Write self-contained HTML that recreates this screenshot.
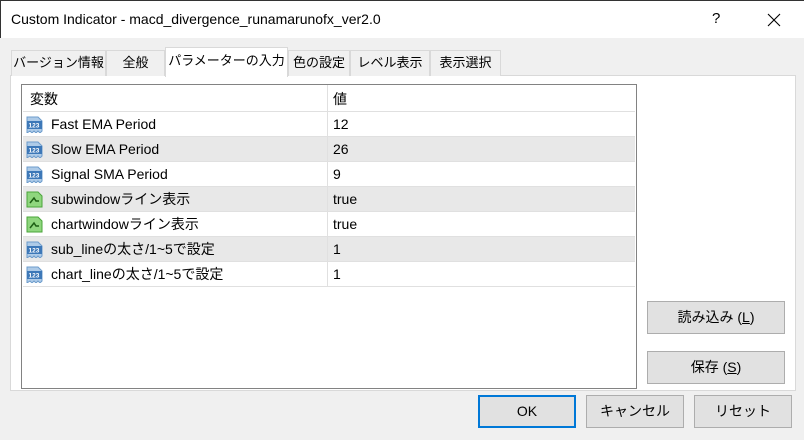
<!DOCTYPE html><html><head><meta charset="utf-8"><style>
*{box-sizing:border-box;margin:0;padding:0}
body{width:804px;height:440px;overflow:hidden;background:#f0f0f0;font-family:"Liberation Sans","Noto Sans CJK JP",sans-serif;font-size:13px;color:#000;position:relative}
.abs{position:absolute}
#title{left:0;top:0;width:804px;height:38px;background:#fff;border-left:1px solid #333;border-top:1px solid #333}
#title span{position:absolute;left:10px;top:10px;font-size:14px}
.tab{position:absolute;top:50px;height:26px;border:1px solid #d9d9d9;border-bottom:none;background:#f0f0f0;text-align:center;line-height:24px;font-size:13px}
#panel{left:10px;top:75px;width:786px;height:316px;background:#fff;border:1px solid #d9d9d9}
#list{left:21px;top:84px;width:616px;height:305px;border:1px solid #828282;background:#fff}
.row{position:absolute;left:1px;width:612px;height:25px;border-bottom:1px solid #e0e0e0;font-size:14px}
.row.g{background:#e8e8e8}
.row .n,.row .v{position:absolute;top:0;height:24px;line-height:24px;white-space:nowrap}
.row .n{left:28px}
.row .v{left:310px}
.row .d{position:absolute;left:304px;top:0;width:1px;height:25px;background:#e0e0e0}
.ic{position:absolute;left:3px;top:4px;width:17px;height:17px}
.btn{position:absolute;height:33px;background:#e1e1e1;border:1px solid #adadad;text-align:center;line-height:31px;font-size:14px}
</style></head><body>
<div id="title" class="abs"><span>Custom Indicator - macd_divergence_runamarunofx_ver2.0</span>
<span style="left:711px;top:9px;font-size:15px">?</span>
<svg style="position:absolute;left:766px;top:12px" width="14" height="14"><path d="M1 1L13 13M13 1L1 13" stroke="#000" stroke-width="1.1"/></svg></div>
<div id="panel" class="abs"></div>
<div class="tab" style="left:11px;width:95px">バージョン情報</div>
<div class="tab" style="left:106px;width:59px">全般</div>
<div class="tab" style="left:165px;width:123px;top:47px;height:30px;background:#fff;line-height:26px">パラメーターの入力</div>
<div class="tab" style="left:288px;width:62px">色の設定</div>
<div class="tab" style="left:350px;width:80px">レベル表示</div>
<div class="tab" style="left:430px;width:71px">表示選択</div>
<div id="list" class="abs">
<div class="row" style="top:0;height:27px"><span class="n" style="left:7px;top:2px">変数</span><span class="v" style="top:2px">値</span><div class="d" style="height:27px"></div></div>
<div class="row" style="top:27px"><svg class="ic"><path d="M1 1H12L16 5V15L14 17L12 15L10 17L8 15L6 17L4 15L1 17Z" fill="#aecbe8" stroke="#6d9ccc"/><rect x="1" y="5" width="15" height="8" fill="#3d78b8"/><text x="2.5" y="11.5" font-size="6.5" fill="#fff" font-family="Liberation Sans" font-weight="bold">123</text></svg><span class="n">Fast EMA Period</span><span class="v">12</span><div class="d"></div></div>
<div class="row g" style="top:52px"><svg class="ic"><path d="M1 1H12L16 5V15L14 17L12 15L10 17L8 15L6 17L4 15L1 17Z" fill="#aecbe8" stroke="#6d9ccc"/><rect x="1" y="5" width="15" height="8" fill="#3d78b8"/><text x="2.5" y="11.5" font-size="6.5" fill="#fff" font-family="Liberation Sans" font-weight="bold">123</text></svg><span class="n">Slow EMA Period</span><span class="v">26</span><div class="d"></div></div>
<div class="row" style="top:77px"><svg class="ic"><path d="M1 1H12L16 5V15L14 17L12 15L10 17L8 15L6 17L4 15L1 17Z" fill="#aecbe8" stroke="#6d9ccc"/><rect x="1" y="5" width="15" height="8" fill="#3d78b8"/><text x="2.5" y="11.5" font-size="6.5" fill="#fff" font-family="Liberation Sans" font-weight="bold">123</text></svg><span class="n">Signal SMA Period</span><span class="v">9</span><div class="d"></div></div>
<div class="row g" style="top:102px"><svg class="ic"><path d="M1 1H12L16 5V16H1Z" fill="#8fd67e" stroke="#4aa53a"/><path d="M4 12L8 7L10 10H13" stroke="#1d5e14" stroke-width="1.5" fill="none"/></svg><span class="n">subwindowライン表示</span><span class="v">true</span><div class="d"></div></div>
<div class="row" style="top:127px"><svg class="ic"><path d="M1 1H12L16 5V16H1Z" fill="#8fd67e" stroke="#4aa53a"/><path d="M4 12L8 7L10 10H13" stroke="#1d5e14" stroke-width="1.5" fill="none"/></svg><span class="n">chartwindowライン表示</span><span class="v">true</span><div class="d"></div></div>
<div class="row g" style="top:152px"><svg class="ic"><path d="M1 1H12L16 5V15L14 17L12 15L10 17L8 15L6 17L4 15L1 17Z" fill="#aecbe8" stroke="#6d9ccc"/><rect x="1" y="5" width="15" height="8" fill="#3d78b8"/><text x="2.5" y="11.5" font-size="6.5" fill="#fff" font-family="Liberation Sans" font-weight="bold">123</text></svg><span class="n">sub_lineの太さ/1~5で設定</span><span class="v">1</span><div class="d"></div></div>
<div class="row" style="top:177px"><svg class="ic"><path d="M1 1H12L16 5V15L14 17L12 15L10 17L8 15L6 17L4 15L1 17Z" fill="#aecbe8" stroke="#6d9ccc"/><rect x="1" y="5" width="15" height="8" fill="#3d78b8"/><text x="2.5" y="11.5" font-size="6.5" fill="#fff" font-family="Liberation Sans" font-weight="bold">123</text></svg><span class="n">chart_lineの太さ/1~5で設定</span><span class="v">1</span><div class="d"></div></div>
</div>
<div class="btn" style="left:647px;top:301px;width:138px">読み込み (<u>L</u>)</div>
<div class="btn" style="left:647px;top:351px;width:138px">保存 (<u>S</u>)</div>
<div class="btn" style="left:478px;top:395px;width:98px;border:2px solid #0078d7;line-height:29px">OK</div>
<div class="btn" style="left:586px;top:395px;width:98px">キャンセル</div>
<div class="btn" style="left:694px;top:395px;width:98px">リセット</div>
</body></html>
